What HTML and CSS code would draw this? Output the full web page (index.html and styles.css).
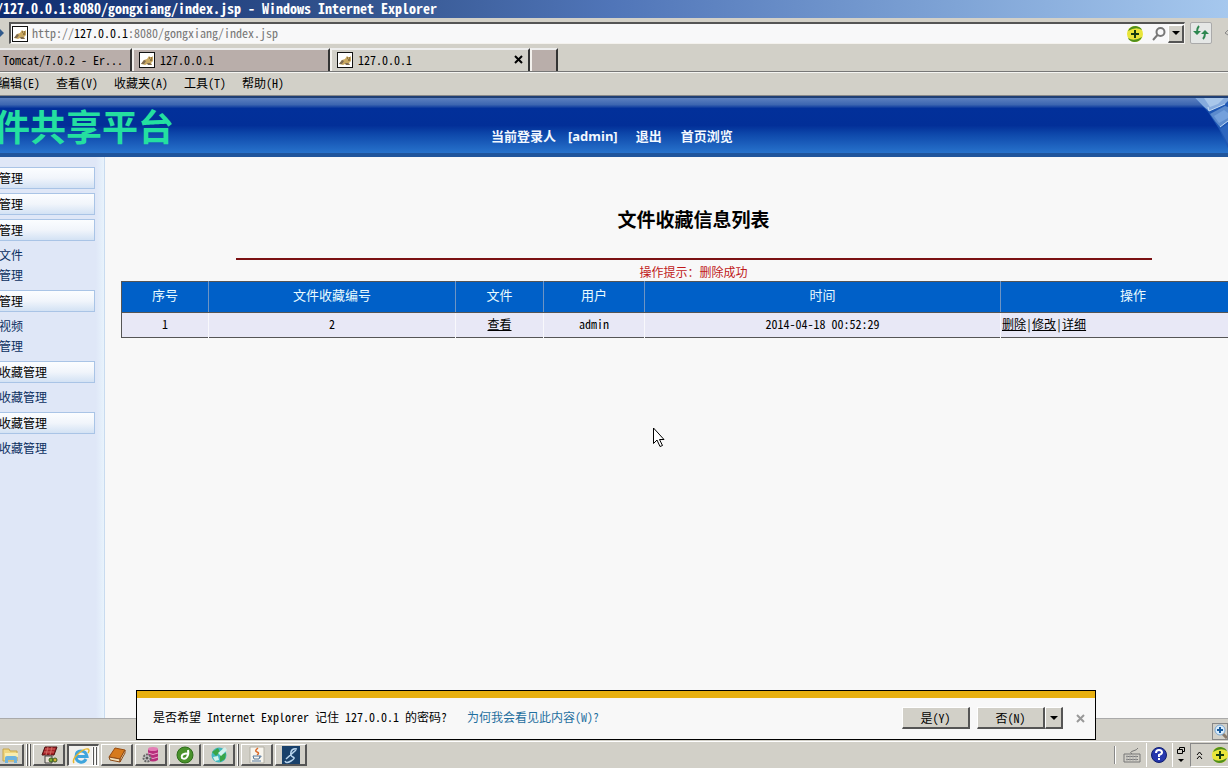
FILE: index.html
```html
<!DOCTYPE html>
<html lang="zh-CN">
<head>
<meta charset="utf-8">
<title>文件共享平台</title>
<link rel="stylesheet" href="styles.css">
</head>
<body>
<svg class="defs" aria-hidden="true">
  <symbol id="cat" viewBox="0 0 16 16">
    <rect x="0.5" y="0.5" width="15" height="15" fill="#fff" stroke="#111"/>
    <path d="M2 12l3-4 3-1 2-3 1 1h2l1-1v5l-2 2 1 2h-3l-2-1-2 1z" fill="#c9a861"/>
    <path d="M2 12l3-4 2 1-2 3zM8 11l3 0 2 2H9z" fill="#7d6a52"/>
    <path d="M10 6h1M12 6h1M11 8h2" stroke="#5d4520"/>
  </symbol>
  <symbol id="plus" viewBox="0 0 16 16">
    <circle cx="8" cy="8" r="8" fill="#e9e53a"/>
    <path d="M1 5Q3 0 9 0q5 1 6 4Q9 0 1 5zM15 11q-2 5-8 5-5-1-6-4 6 4 14-1z" fill="#4f8f1c"/>
    <path d="M8 4v8M4 8h8" stroke="#153c10" stroke-width="2"/>
  </symbol>
  <symbol id="down" viewBox="0 0 8 4"><path d="M0 0h8L4 4z"/></symbol>
</svg>

<div class="window">
  <header class="titlebar">/127.0.0.1:8080/gongxiang/index.jsp - Windows Internet Explorer</header>

  <div class="address">
    <svg class="fwd" viewBox="0 0 4 8"><path d="M0 0l4 4-4 4z" fill="#315a8c"/></svg>
    <div class="field">
      <svg class="i16"><use href="#cat"/></svg>
      <span class="url">http://<b>127.0.0.1</b>:8080/gongxiang/index.jsp</span>
      <svg class="i16"><use href="#plus"/></svg>
      <svg class="search" viewBox="0 0 14 14" fill="none" stroke="#777" stroke-width="2"><circle cx="8.500" cy="5" r="4"/><path d="M5.500 8L1 13"/></svg>
      <button class="btn drop" aria-label="地址列表"><svg class="arrow"><use href="#down"/></svg></button>
    </div>
    <button class="refresh" aria-label="刷新"><svg class="i16" viewBox="0 0 16 16" fill="none" stroke="#2d8750" stroke-width="2"><path d="M6 1Q4 3 4 7M10 14q2-2 2-6"/><path d="M0 6h8L4 10zM8 9h8l-4-4z" fill="#2d8750" stroke="none"/></svg></button>
    <svg class="stop" viewBox="0 0 4 8"><path d="M4 1L1 4l3 2" fill="none" stroke="#888"/></svg>
  </div>

  <nav class="tabs">
    <button class="tab first">Tomcat/7.0.2 - Er...</button>
    <button class="tab"><svg class="i16"><use href="#cat"/></svg><span>127.0.0.1</span></button>
    <button class="tab active"><svg class="i16"><use href="#cat"/></svg><span>127.0.0.1</span><svg class="x" viewBox="0 0 9 9"><path d="M1 1l7 7M8 1L1 8" stroke="#000" stroke-width="2"/></svg></button>
    <button class="tab new" aria-label="新选项卡"></button>
  </nav>

  <nav class="menu">
    <button>编辑(E)</button><button>查看(V)</button><button>收藏夹(A)</button><button>工具(T)</button><button>帮助(H)</button>
  </nav>

  <div class="banner">
    <div class="logo"><h1>件共享平台</h1></div>
    <div class="user"><span>当前登录人</span><span class="admin">[admin]</span><a href="#">退出</a><a href="#">首页浏览</a></div>
    <svg class="deco" viewBox="0 0 36 55">
      <path d="M3 0h33v50L27 31 16 14z" fill="#1e57b4"/>
      <path d="M3 0h33v3l-3 3-16 7-6-5z" fill="#86abdd"/>
      <path d="M12 0h20l-6 6-8 3z" fill="#a9c7ea"/>
      <path d="M18 16l15-8 3 1v14l-8 6-5-6z" fill="#5c8bcd"/>
      <path d="M22 18l10-6 4 3v5l-9 5z" fill="#73a0dc"/>
      <path d="M28 31l8-5v20z" fill="#2c65be"/>
      <path d="M17 13l16-7M28 29l8-6M17 13l-1-4" fill="none" stroke="#c3daf4"/>
    </svg>
  </div>

  <div class="page">
    <aside class="side">
      <h2>管理</h2>
      <h2>管理</h2>
      <h2>管理</h2>
      <ul><li><a href="#">文件</a></li><li><a href="#">管理</a></li></ul>
      <h2>管理</h2>
      <ul><li><a href="#">视频</a></li><li><a href="#">管理</a></li></ul>
      <h2>收藏管理</h2>
      <ul><li><a href="#">收藏管理</a></li></ul>
      <h2>收藏管理</h2>
      <ul><li><a href="#">收藏管理</a></li></ul>
    </aside>
    <main class="main">
      <div class="content">
        <h2>文件收藏信息列表</h2>
        <hr>
        <p class="tip">操作提示：删除成功</p>
        <table>
          <colgroup><col class="c1"><col class="c2"><col class="c3"><col class="c4"><col class="c5"><col></colgroup>
          <thead><tr><th>序号</th><th>文件收藏编号</th><th>文件</th><th>用户</th><th>时间</th><th>操作</th></tr></thead>
          <tbody><tr><td>1</td><td>2</td><td><a href="#">查看</a></td><td>admin</td><td>2014-04-18 00:52:29</td><td class="ops"><a href="#">删除</a>|<a href="#">修改</a>|<a href="#">详细</a></td></tr></tbody>
        </table>
      </div>
    </main>
  </div>

  <div class="status">
    <div class="zoom"><svg class="i16" viewBox="0 0 16 16"><path d="M9 9l5 5" stroke="#8a7a6a" stroke-width="3"/><circle cx="7" cy="6" r="5" fill="#d9ecfb" stroke="#7ba6cf"/><path d="M7 3v6M4 6h6" stroke="#185a9d" stroke-width="2"/></svg></div>
  </div>

  <footer class="taskbar">
    <button class="task cut" aria-label="资源管理器"><svg class="i18" viewBox="0 0 18 18"><path d="M1 3h6l1 2h7v10H1z" fill="#f0d780" stroke="#c6a54a"/><path d="M3 7h13v4H3z" fill="#f8edb0"/><path d="M3 17v-5q0-2 2-2h8q2 0 2 2v5h-3v-3H6v3z" fill="#6fb4df"/></svg></button>
    <i class="stack"></i><i class="stack gap"></i>
    <button class="task" aria-label="编辑器"><svg class="i18" viewBox="0 0 18 18"><path d="M5 1h12l-3 8H2z" fill="#a92229" stroke="#4b1010"/><path d="M5 3h10M4 6h10M8 1L6 9M12 1l-2 8" stroke="#d26a62"/><path d="M5 10h7v7H5z" fill="#e8e0d5" stroke="#444"/><circle cx="11" cy="14" r="2" fill="#7dac35" stroke="#395f20"/><circle cx="15" cy="14" r="2" fill="#d7ad34" stroke="#395f20"/></svg></button>
    <button class="task on" aria-label="Internet Explorer"><svg class="i18" viewBox="0 0 18 18" fill="none"><path d="M14 12q-2 4-6 3-4-1-4-5.500Q4 4 9 4t6 5.500H5" stroke="#3fa5dc" stroke-width="3"/><path d="M2 16q-2-3 3-8 7-7 11-6 2 1 0 4" stroke="#e8b72c" stroke-width="1.500"/></svg><i class="stack"></i><i class="stack"></i></button>
    <button class="task" aria-label="书籍"><svg class="i18" viewBox="0 0 18 18"><path d="M7 2l10 2-5 9-11-2z" fill="#d67a1c" stroke="#9a4b0e"/><path d="M1 11l11 2v3L2 14zM12 13l5-9v3l-5 9z" fill="#f1ddb6" stroke="#8d4a16"/></svg></button>
    <button class="task" aria-label="数据库"><svg class="i18" viewBox="0 0 18 18"><path d="M6 3v11q5 3 10 0V3z" fill="#b72d7b"/><ellipse cx="11" cy="3" rx="5" ry="2" fill="#e37db5"/><path d="M6 7q5 3 10 0M6 11q5 3 10 0" fill="none" stroke="#e9a2cb"/><circle cx="5" cy="12" r="3.500" fill="#ccc" stroke="#666" stroke-width="2" stroke-dasharray="2 1"/><circle cx="5" cy="12" r="1.500" fill="#555"/></svg></button>
    <button class="task" aria-label="Dreamweaver"><svg class="i18" viewBox="0 0 18 18" fill="none"><circle cx="9" cy="9" r="8" fill="#4a922c" stroke="#2e6e1c"/><path d="M12 4q1 4-1 7-2 3-5 1-1-3 2-4 2-1 4 0" stroke="#fff" stroke-width="2"/></svg></button>
    <button class="task" aria-label="浏览器"><svg class="i18" viewBox="0 0 18 18"><circle cx="9" cy="9" r="7.500" fill="#42b8bf"/><path d="M2 6l6-4 2 4-4 4zM10 9l6-2-1 6-5 3z" fill="#39a547"/><path d="M8 7l7-6 2 3-6 6zM3 11l5-1 1 4-4 1z" fill="#d3f3ec"/></svg></button>
    <i class="stack gap"></i>
    <button class="task" aria-label="Java"><svg class="i18" viewBox="0 0 18 18" fill="none"><path d="M2 1h14v16H2z" fill="#f7f5ee" stroke="#b3b0a5"/><path d="M10 2q-4 3-1 4t0 3" stroke="#db6a29" stroke-width="1.500"/><path d="M5 10h7l-1 3H6zM12 10q3 0-1 2M4 15h9" stroke="#55779b"/></svg></button>
    <button class="task" aria-label="SQL"><svg class="i18" viewBox="0 0 18 18" fill="none"><path d="M0 0h18v18H0z" fill="#19416b"/><path d="M15 3q-5-1-6 3t2 5-2 4-6 0M4 13l10-9" stroke="#b9d5ed" stroke-width="1.500"/></svg></button>

    <div class="tray">
      <i class="grip"></i>
      <svg class="i18" viewBox="0 0 18 18" fill="none" stroke="#777"><path d="M1 8h16v8H1zM3 10.500h12M3 13.500h12M9 8q-3-2 1-3t5-3"/><path d="M4 9v6M7 9v6M10 9v6M13 9v6" stroke="#aaa"/></svg>
      <i class="sep"></i>
      <svg class="i16" viewBox="0 0 16 16" fill="none"><circle cx="8" cy="8" r="7.500" fill="#2638ad" stroke="#101e6e"/><path d="M5 6q0-3 3-3t3 2.500Q11 7 8 8v2M8 11v2" stroke="#fff" stroke-width="2"/></svg>
      <i class="sep"></i>
      <svg class="restore" viewBox="0 0 8 16" fill="none" stroke="#000"><path d="M2.500 3V.5h5v4H6M.5 2.500h5v4h-5z"/><path d="M1 12h6l-3 3z" fill="#000" stroke="none"/></svg>
      <div class="notify">
        <svg class="chev" viewBox="0 0 7 9" fill="none" stroke="#000"><path d="M1 4l2.500-3L6 4M1 8l2.500-3L6 8"/></svg>
        <svg class="i16"><use href="#plus"/></svg>
      </div>
    </div>
  </footer>

  <section class="prompt">
    <p>是否希望 Internet Explorer 记住 127.0.0.1 的密码?</p>
    <a href="#">为何我会看见此内容(W)?</a>
    <div class="actions">
      <button class="btn">是(Y)</button>
      <div class="split"><button class="btn">否(N)</button><button class="btn more" aria-label="更多"><svg class="arrow"><use href="#down"/></svg></button></div>
      <button class="close" aria-label="关闭"><svg class="x" viewBox="0 0 9 9"><path d="M1 1l7 7M8 1L1 8" stroke="#999" stroke-width="2"/></svg></button>
    </div>
  </section>

  <svg class="cursor" viewBox="0 0 12 21"><path d="M.5 1v15.500l3.500-3.500 3 6.500 2.500-1-3-6H11z" fill="#fff" stroke="#000"/></svg>
</div>
</body>
</html>
```

FILE: styles.css
```css
* { box-sizing: border-box; }
body {
  margin: 0;
  font: 12px/20px "Noto Sans Mono CJK SC", "Liberation Mono", "Noto Sans CJK SC", monospace;
  color: #000;
  background: #d2d0c8;
}
button { font: inherit; color: inherit; margin: 0; padding: 0; border: 0; background: none; }
h1, h2, p, ul { margin: 0; padding: 0; }
ul { list-style: none; }
svg { display: block; flex: none; }
.defs { display: none; }
.i16 { width: 16px; height: 16px; }
.i18 { width: 18px; height: 18px; }
.arrow { width: 8px; height: 4px; }
.x { width: 9px; height: 9px; }

.window { position: relative; display: flex; flex-direction: column; height: 100vh; overflow: hidden; }

.titlebar {
  flex: none;
  height: 18px;
  margin-left: -4px;
  font-size: 14px;
  font-weight: bold;
  line-height: 16px;
  white-space: pre;
  color: #fff;
  background: linear-gradient(90deg, #0f2c70, #34558f 30%, #5075b8 50%, #7fa4d6 78%, #a6c8ee);
}

.address { flex: none; display: flex; align-items: center; height: 30px; gap: 5px; }
.fwd, .stop { width: 4px; height: 8px; }
.stop { margin-left: 7px; }
.field {
  flex: 1;
  display: flex;
  align-items: center;
  height: 22px;
  padding-left: 1px;
  border: 1px solid #f4f2ee;
  border-top: 2px solid #555;
  border-left: 2px solid #555;
  background: #f8f8f9;
}
.url { flex: 1; margin-left: 4px; padding-bottom: 2px; color: #777; }
.url b { font-weight: normal; color: #000; }
.search { width: 14px; height: 14px; margin: 0 2px 0 9px; }
.btn {
  display: flex;
  align-items: center;
  justify-content: center;
  background: #d2d0c8;
  border: 1px solid #fff;
  border-right: 2px solid #555;
  border-bottom: 2px solid #555;
}
.drop { width: 16px; height: 18px; }
.refresh { display: flex; align-items: center; justify-content: center; width: 22px; height: 22px; border: 1px solid #aaa; border-radius: 2px; background: #e5e7e6; }

.tabs { flex: none; display: flex; height: 24px; border-bottom: 1px solid #777; }
.tab {
  display: flex;
  align-items: center;
  gap: 5px;
  width: 198px;
  padding: 0 8px 2px 5px;
  background: #b9aeaa;
  border-top: 2px solid #eee;
  border-left: 2px solid #f3f1ed;
  border-right: 2px solid #333;
}
.tab.first { width: 132px; padding-left: 3px; border-left: 0; white-space: nowrap; }
.tab.active { width: 200px; padding-right: 5px; background: #d2d0c8; }
.tab.active .x { margin-left: auto; }
.tab.new { width: 28px; }

.menu {
  flex: none;
  display: flex;
  gap: 16px;
  height: 24px;
  margin-left: -2px;
  padding-bottom: 2px;
  border-top: 1px solid #f5f5f2;
  border-bottom: 1px solid #888;
}

.banner {
  flex: none;
  position: relative;
  display: flex;
  align-items: center;
  height: 61px;
  border-top: 2px solid #1f3f75;
  border-bottom: 4px solid #20559c;
  background: linear-gradient(#5c80c0, #3d66b0 12%, #02309a 19%, #022f98 50%, #0d47aa 65%, #2873cc);
}
.logo { flex: none; display: flex; justify-content: flex-end; width: 174px; overflow: hidden; }
.logo h1 { flex: none; padding-bottom: 2px; font-size: 36px; line-height: 44px; font-weight: bold; color: #24dfa0; }
.user { display: flex; margin: 20px 0 0 317px; font: bold 13px/20px "Noto Sans", "Noto Sans CJK SC", sans-serif; color: #f2f8ff; white-space: nowrap; }
.user .admin { margin: 0 18px 0 12px; }
.user a { color: inherit; text-decoration: none; }
.user a + a { margin-left: 19px; }
.deco { position: absolute; right: 0; top: 0; width: 36px; height: 55px; }

.page { flex: 1; min-height: 0; display: flex; background: #f8f8f8; }
.side {
  flex: none;
  width: 105px;
  padding: 10px 9px 0 0;
  text-indent: -1px;
  border-right: 1px solid #c9dbef;
  background: linear-gradient(90deg, #dfe7f7 92%, #e8f3fc);
}
.side h2 {
  height: 22px;
  margin-bottom: 4px;
  font-size: 12px;
  font-weight: normal;
  line-height: 20px;
  border: 1px solid #a9c4e6;
  border-left: 0;
  background: linear-gradient(#fbfdff, #f1f5fb 50%, #d3e2f4);
}
.side ul { padding-bottom: 5px; }
.side li { height: 20px; }
.side a { color: #0b2f5f; text-decoration: none; }
.main { flex: 1; min-width: 0; overflow: hidden; }
.content { margin: 0 -38px 0 16px; }
.content h2 { padding: 47px 0 24px; font-size: 19px; line-height: 30px; text-align: center; }
.content hr { width: 80%; height: 2px; margin: 0 auto 3px; border: 0; background: #7b1113; }
.tip { text-align: center; line-height: 18px; color: #c01818; }
table { width: 100%; table-layout: fixed; border-collapse: collapse; border: 1px solid #555; }
.c1 { width: 87px; }
.c2 { width: 247px; }
.c3 { width: 88px; }
.c4 { width: 101px; }
.c5 { width: 356px; }
th { height: 31px; padding: 0 0 5px; font-size: 13px; font-weight: normal; color: #e9fbff; background: #0060c8; border-right: 1px solid #6d94c4; border-bottom: 1px solid #555; }
td { height: 25px; padding: 0 0 2px; text-align: center; background: #e8e8f6; border-right: 1px solid #f8f8fc; }
td a { color: #000; }
.ops { padding-left: 1px; text-align: left; }

.status { flex: none; display: flex; justify-content: flex-end; height: 23px; padding-top: 4px; border-top: 1px solid #aaa; }
.zoom { width: 16px; height: 17px; overflow: hidden; border: 1px solid #888; }

.taskbar { flex: none; display: flex; align-items: center; gap: 2px; height: 27px; border-top: 1px solid #fff; }
.task {
  flex: none;
  display: flex;
  align-items: center;
  justify-content: center;
  width: 32px;
  height: 22px;
  background: #d2d0c8;
  border: 1px solid #fff;
  border-right: 2px solid #555;
  border-bottom: 2px solid #555;
}
.task.cut { width: 24px; border-left: 0; }
.task.on { gap: 2px; background: #f1f0ed; border: 1px solid #fff; border-top: 2px solid #555; border-left: 2px solid #555; }
.stack { width: 2px; height: 22px; margin-right: -1px; border-right: 1px solid #555; border-left: 1px solid #fff; }
.task .stack { height: 18px; }
.stack.gap { margin-right: 0; }
.tray { display: flex; align-items: center; gap: 7px; height: 24px; margin-left: auto; }
.grip { width: 2px; height: 18px; border-left: 1px solid #888; border-right: 1px solid #fff; }
.sep { width: 1px; height: 24px; margin: 0 -3px 0 -2px; background: #fff; }
.restore { width: 8px; height: 16px; }
.notify { display: flex; align-items: center; gap: 9px; width: 38px; height: 24px; margin-left: -2px; padding-left: 5px; overflow: hidden; border: 1px solid #888; border-right: 0; border-bottom-color: #fff; }
.chev { width: 7px; height: 9px; }

.prompt {
  position: absolute;
  left: 136px;
  right: 132px;
  bottom: 28px;
  display: flex;
  align-items: center;
  height: 50px;
  padding: 6px 10px 0 16px;
  white-space: nowrap;
  border: 1px solid #000;
  background: linear-gradient(#e8b010 7px, #f8f8f8 7px);
}
.prompt p, .prompt a { padding-bottom: 2px; }
.prompt a { margin-left: 20px; color: #1f6f9f; text-decoration: none; }
.actions { display: flex; align-items: center; gap: 7px; margin-left: auto; }
.prompt .btn { width: 68px; height: 22px; }
.prompt .more { width: 18px; }
.split { display: flex; }
.close { margin-left: 6px; }
.cursor { position: absolute; left: 653px; top: 427px; width: 12px; height: 21px; }
```
